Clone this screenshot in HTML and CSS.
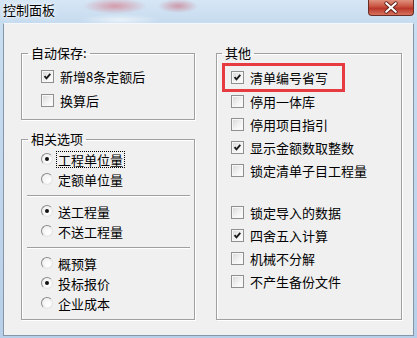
FILE: index.html
```html
<!DOCTYPE html>
<html lang="zh-CN">
<head>
  <meta charset="UTF-8" />
  <meta name="viewport" content="width=device-width, initial-scale=1.0"/>
  <title>控制面板</title>
  <link rel="stylesheet" href="styles.css">
</head>
<body>
  <div class="window">
    <div class="titlebar">
      <span class="title">控制面板</span>
      <span class="close">
        <svg width="46" height="16" viewBox="0 0 46 16">
          <path d="M18 3 L28 12 M28 3 L18 12" stroke="#5a1d16" stroke-width="4" stroke-linecap="round"/>
          <path d="M18 3 L28 12 M28 3 L18 12" stroke="#ffffff" stroke-width="2.2" stroke-linecap="round"/>
        </svg>
      </span>
    </div>

    <div class="client">
      <div class="col">
        <fieldset class="group g-save">
          <legend>自动保存:</legend>
          <label class="row"><span class="cb on"><svg viewBox="0 0 13 13"><path d="M3 6 L5.3 8.6 L9.8 3.4"/></svg></span><span>新增8条定额后</span></label>
          <label class="row"><span class="cb"></span><span>换算后</span></label>
        </fieldset>

        <fieldset class="group g-opts">
          <legend>相关选项</legend>
          <label class="row"><span class="rb on"></span><span class="focus">工程单位量</span></label>
          <label class="row"><span class="rb"></span><span>定额单位量</span></label>
          <div class="sep"></div>
          <label class="row"><span class="rb on"></span><span>送工程量</span></label>
          <label class="row"><span class="rb"></span><span>不送工程量</span></label>
          <div class="sep"></div>
          <label class="row"><span class="rb"></span><span>概预算</span></label>
          <label class="row"><span class="rb on"></span><span>投标报价</span></label>
          <label class="row"><span class="rb"></span><span>企业成本</span></label>
        </fieldset>
      </div>

      <fieldset class="group g-other">
        <legend>其他</legend>
        <label class="row hl"><span class="cb on"><svg viewBox="0 0 13 13"><path d="M3 6 L5.3 8.6 L9.8 3.4"/></svg></span><span>清单编号省写</span></label>
        <label class="row"><span class="cb"></span><span>停用一体库</span></label>
        <label class="row"><span class="cb"></span><span>停用项目指引</span></label>
        <label class="row"><span class="cb on"><svg viewBox="0 0 13 13"><path d="M3 6 L5.3 8.6 L9.8 3.4"/></svg></span><span>显示金额数取整数</span></label>
        <label class="row"><span class="cb"></span><span>锁定清单子目工程量</span></label>
        <div class="spacer"></div>
        <label class="row"><span class="cb"></span><span>锁定导入的数据</span></label>
        <label class="row"><span class="cb on"><svg viewBox="0 0 13 13"><path d="M3 6 L5.3 8.6 L9.8 3.4"/></svg></span><span>四舍五入计算</span></label>
        <label class="row"><span class="cb"></span><span>机械不分解</span></label>
        <label class="row"><span class="cb"></span><span>不产生备份文件</span></label>
      </fieldset>
    </div>
  </div>
</body>
</html>
```

FILE: styles.css
```css
html, body {
  margin: 0;
  padding: 0;
}

body {
  width: 417px;
  height: 338px;
  overflow: hidden;
  font-family: "Noto Sans CJK SC", "Noto Sans", sans-serif;
  font-size: 13px;
  color: #000;
  background: linear-gradient(#cbdff1, #b7cfe8);
}

.window {
  height: 338px;
  padding: 0 3px 2px 3px;
  box-sizing: border-box;
  display: flex;
  flex-direction: column;
}

.titlebar {
  height: 23px;
  margin: 0 -3px;
  padding: 0 3px 0 3px;
  display: flex;
  justify-content: space-between;
  align-items: flex-start;
  background:
    radial-gradient(ellipse 32px 8px at 115px 6px, rgba(214, 96, 110, 0.55), rgba(214, 96, 110, 0)),
    radial-gradient(ellipse 20px 7px at 178px 6px, rgba(200, 80, 96, 0.5), rgba(200, 80, 96, 0)),
    radial-gradient(ellipse 40px 6px at 120px 20px, rgba(255, 255, 255, 0.6), rgba(255, 255, 255, 0)),
    linear-gradient(#d6e6f5, #c6dbef);
}

.title {
  line-height: 20px;
  text-shadow: 0 0 6px #fff, 0 0 3px #fff;
}

.close {
  width: 46px;
  height: 16px;
  box-sizing: border-box;
  border: 1px solid #6a2c24;
  border-top: none;
  border-radius: 0 0 4px 4px;
  background: linear-gradient(#e0917f, #c8503e 45%, #b8362a 55%, #d8735c);
  display: flex;
}

.client {
  flex: 1;
  background: #f0f0f0;
  border: 1px solid #8496a8;
  border-top-color: #f4f8fc;
  display: grid;
  grid-template-columns: 174px 186px;
  column-gap: 21px;
  padding: 21px 11px 15px 17px;
}

.col {
  display: flex;
  flex-direction: column;
}

.group {
  margin: 0;
  min-width: 0;
  border: 1px solid #a0a0a0;
  box-shadow: 1px 1px 0 #fff, inset 1px 1px 0 #fff;
}

.group legend {
  margin-left: -13px;
  padding: 0 3px;
  line-height: 16px;
}

.g-save {
  padding: 3px 0 7px 19px;
}

.g-save .row {
  height: 24px;
}

.g-opts {
  margin-top: 11px;
  padding: 2px 0 6px 19px;
}

.g-opts .row {
  height: 20px;
}

.g-other {
  padding: 6px 0 0 14px;
}

.g-other legend {
  margin-left: -9px;
}

.g-other .row {
  height: 23px;
}

.row {
  display: flex;
  align-items: center;
  gap: 6px;
  line-height: 13px;
}

.cb {
  width: 13px;
  height: 13px;
  box-sizing: border-box;
  border: 1px solid #8e8f8f;
  background: linear-gradient(135deg, #d6d6d6, #f2f2f2 55%, #ffffff);
  box-shadow: inset 0 0 0 1px #f7f7f7;
  flex: none;
}

.cb svg {
  display: block;
  width: 11px;
  height: 11px;
}

.cb path {
  fill: none;
  stroke: #1a1a1a;
  stroke-width: 2.2;
}

.rb {
  width: 12px;
  height: 12px;
  box-sizing: border-box;
  border-radius: 50%;
  border: 1px solid;
  border-color: #8c8c8c #e4e4e4 #e4e4e4 #8c8c8c;
  background: radial-gradient(circle at 65% 65%, #ffffff, #ececec);
  display: flex;
  align-items: center;
  justify-content: center;
  flex: none;
  margin-right: -1px;
}

.rb.on::after {
  content: "";
  width: 4px;
  height: 4px;
  border-radius: 50%;
  background: #111;
}

.focus {
  outline: 1px dotted #000;
  padding: 1px 1px;
  margin-left: -1px;
}

.sep {
  height: 1px;
  background: #a0a0a0;
  border-bottom: 1px solid #fff;
  margin: 6px 4px 4px -14px;
}

.spacer {
  height: 19px;
}

.hl {
  box-sizing: border-box;
  width: 123px;
  height: 29px !important;
  margin: -4px 0 -2px -9px;
  padding-left: 6px;
  border: 3px solid #e63b41;
}
```
